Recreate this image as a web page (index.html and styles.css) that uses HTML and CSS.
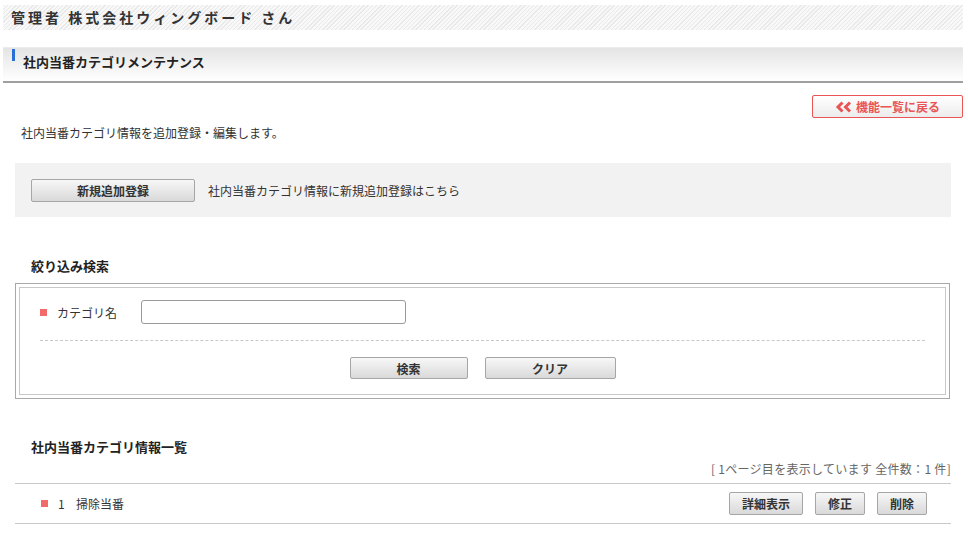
FILE: index.html
```html
<!DOCTYPE html>
<html lang="ja">

<head>
  <meta charset="UTF-8">
  <meta name="viewport" content="width=device-width, initial-scale=1.0">
  <title>社内当番カテゴリメンテナンス</title>
  <link rel="stylesheet" href="styles.css">
</head>
<body>
  <div class="user-bar">管理者 株式会社ウィングボード さん</div>

  <h1 class="page-title">社内当番カテゴリメンテナンス</h1>

  <div class="back-row">
    <a href="#" class="back-btn">
      <svg width="18" height="12" viewBox="0 0 18 12">
        <path d="M7.5 1.5 L3 6 L7.5 10.5" fill="none" stroke="#e95555" stroke-width="3"/>
        <path d="M15 1.5 L10.5 6 L15 10.5" fill="none" stroke="#e95555" stroke-width="3"/>
      </svg>
      機能一覧に戻る
    </a>
  </div>

  <p class="lead">社内当番カテゴリ情報を追加登録・編集します。</p>

  <div class="add-panel">
    <button class="btn btn-add">新規追加登録</button>
    <span>社内当番カテゴリ情報に新規追加登録はこちら</span>
  </div>

  <h2 class="section-title search-title">絞り込み検索</h2>
  <div class="search-box">
    <div class="search-inner">
      <div class="field-row">
        <span class="mark"></span>
        <label class="field-label">カテゴリ名</label>
        <input type="text" class="field-input">
      </div>
      <div class="search-actions">
        <button class="btn btn-search">検索</button>
        <button class="btn btn-clear">クリア</button>
      </div>
    </div>
  </div>

  <h2 class="section-title list-title">社内当番カテゴリ情報一覧</h2>
  <p class="pager">[ 1ページ目を表示しています 全件数：1 件]</p>
  <div class="list">
    <div class="list-row">
      <span class="mark"></span>
      <span class="row-no">1</span>
      <span class="row-name">掃除当番</span>
      <div class="row-actions">
        <button class="btn btn-small btn-detail">詳細表示</button>
        <button class="btn btn-small">修正</button>
        <button class="btn btn-small">削除</button>
      </div>
    </div>
  </div>
</body>

</html>
```

FILE: styles.css
```css
body {
  margin: 0;
  width: 968px;
  font-family: "Noto Sans CJK JP", "Noto Sans", sans-serif;
  font-size: 12px;
  color: #333;
  background: #fff;
}

.user-bar {
  margin: 5px 5px 0 3px;
  height: 25px;
  line-height: 24px;
  padding-left: 8px;
  font-size: 14px;
  font-weight: bold;
  letter-spacing: 3px;
  color: #333;
  background: repeating-linear-gradient(135deg, #e9e9e9 0 1px, #f8f8f8 1px 3px);
}

.page-title {
  position: relative;
  margin: 17px 5px 0 3px;
  height: 36px;
  padding: 6px 0 0 20px;
  box-sizing: border-box;
  font-size: 13px;
  font-weight: bold;
  line-height: 16px;
  color: #222;
  border-top: 1px solid #ececec;
  border-bottom: 2px solid #a09ea0;
  background: linear-gradient(#e4e4e4, #f7f7f7 70%, #fff);
}

.page-title::before {
  content: "";
  position: absolute;
  left: 9px;
  top: 1px;
  width: 3px;
  height: 12px;
  background: #2a6fd6;
}

.back-row {
  display: flex;
  justify-content: flex-end;
  margin: 12px 5px 0 0;
}

.back-btn {
  display: flex;
  align-items: center;
  justify-content: center;
  gap: 3px;
  width: 151px;
  height: 23px;
  box-sizing: border-box;
  border: 1px solid #e95555;
  border-radius: 2px;
  background: linear-gradient(#fff, #ececec);
  color: #e95555;
  font-weight: bold;
  font-size: 12px;
  text-decoration: none;
}

.lead {
  margin: 5px 0 0 21px;
  line-height: 20px;
}

.add-panel {
  display: flex;
  align-items: center;
  gap: 13px;
  margin: 20px 17px 0 15px;
  height: 54px;
  padding-left: 16px;
  background: #f2f2f2;
}

.btn {
  font-family: "Noto Sans CJK JP", "Noto Sans", sans-serif;
  font-size: 12px;
  font-weight: bold;
  color: #333;
  height: 23px;
  padding: 0;
  border: 1px solid #a6a6a6;
  border-radius: 2px;
  background: linear-gradient(#f7f7f7, #d9d9d9);
  cursor: pointer;
}

.btn-add {
  width: 164px;
}

.section-title {
  margin: 0 0 0 31px;
  font-size: 13px;
  font-weight: bold;
  line-height: 20px;
  color: #222;
}

.search-title {
  margin-top: 39px;
}

.search-box {
  margin: 7px 18px 0 15px;
  padding: 3px;
  border: 1px solid #a8a8a8;
}

.search-inner {
  border: 1px solid #c8c8c8;
  padding: 11px 20px 15px;
}

.field-row {
  display: flex;
  align-items: center;
  height: 26px;
  padding-bottom: 15px;
  border-bottom: 1px dashed #c8c8c8;
}

.mark {
  display: inline-block;
  width: 7px;
  height: 7px;
  background: #f26a6a;
}

.field-label {
  margin-left: 10px;
  width: 84px;
  font-size: 12px;
}

.field-input {
  width: 265px;
  height: 24px;
  box-sizing: border-box;
  border: 1px solid #999;
  border-radius: 3px;
}

.search-actions {
  display: flex;
  justify-content: center;
  gap: 17px;
  margin-top: 16px;
}

.btn-search {
  width: 118px;
  height: 22px;
}

.btn-clear {
  width: 131px;
  height: 22px;
}

.list-title {
  margin-top: 38px;
}

.pager {
  margin: 3px 17px 0 0;
  text-align: right;
  line-height: 18px;
  color: #666;
  letter-spacing: 0.3px;
}

.list {
  margin: 5px 17px 0 15px;
  border-top: 1px solid #c8c8c8;
}

.list-row {
  display: flex;
  align-items: center;
  height: 39px;
  padding-left: 26px;
  border-bottom: 1px solid #c8c8c8;
}

.row-no {
  margin-left: 10px;
  width: 18px;
}

.row-actions {
  display: flex;
  gap: 12px;
  margin-left: auto;
  margin-right: 24px;
}

.btn-small {
  width: 50px;
  height: 23px;
}

.btn-detail {
  width: 74px;
}
```
